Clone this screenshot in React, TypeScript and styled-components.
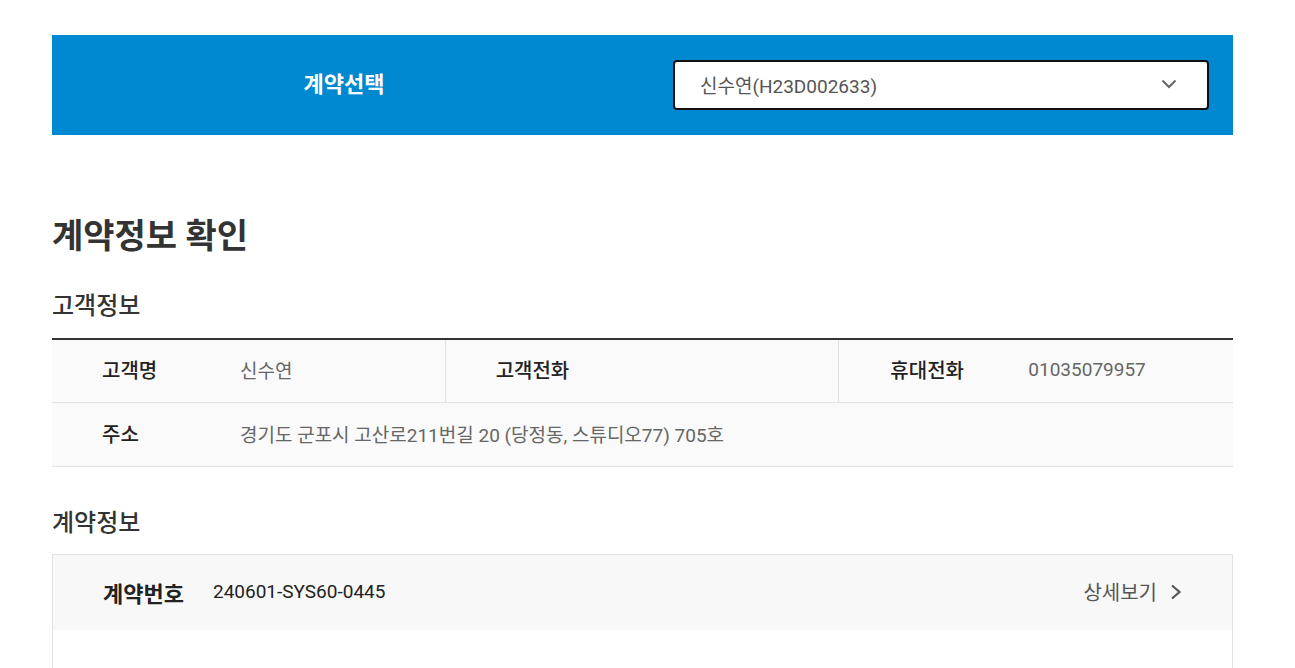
import React from "react";
import styled, { createGlobalStyle } from "styled-components";

const GlobalStyle = createGlobalStyle`
  html, body {
    margin: 0;
    padding: 0;
    background: #ffffff;
  }
  body {
    font-family: Roboto, "Noto Sans CJK KR", "Noto Sans", sans-serif;
    color: #222222;
  }
  * { box-sizing: border-box; }
`;

const Page = styled.div`
  width: 1181px;
  margin-left: 52px;
  padding-top: 35px;
  padding-bottom: 40px;
`;

const SelectBand = styled.section`
  display: flex;
  align-items: center;
  height: 100px;
  background: #0089d1;
`;

const BandLabel = styled.h2`
  flex: 0 0 584px;
  margin: 0;
  padding-bottom: 6px;
  text-align: center;
  color: #ffffff;
  font-size: 22px;
  font-weight: 700;
`;

const SelectBox = styled.div`
  display: flex;
  align-items: center;
  justify-content: space-between;
  width: 536px;
  height: 50px;
  margin-left: 37px;
  padding: 0 30px 2px 25px;
  background: #ffffff;
  border: 2px solid #111111;
  border-radius: 4px;
  font-size: 19px;
  color: #555555;
  cursor: pointer;
`;

const PageTitle = styled.h1`
  margin: 78px 0 0;
  font-size: 34px;
  line-height: 46px;
  font-weight: 700;
  color: #333333;
`;

const SectionTitle = styled.h3<{ $gap: number }>`
  margin: ${(p) => p.$gap}px 0 0;
  font-size: 24px;
  line-height: 32px;
  font-weight: 500;
  color: #333333;
`;

const InfoTable = styled.div`
  margin-top: 16px;
  border-top: 2px solid #333333;
  background: #fafafa;
`;

const InfoRow = styled.div`
  display: grid;
  grid-template-columns: 1fr 1fr 1fr;
  border-bottom: 1px solid #e2e2e2;
`;

const InfoCell = styled.div<{ $span?: number; $divider?: boolean }>`
  display: flex;
  align-items: center;
  height: ${(p) => (p.$span ? 63 : 62)}px;
  padding-left: ${(p) => (p.$divider === undefined && !p.$span ? 51 : 50)}px;
  padding-bottom: 3px;
  grid-column: span ${(p) => p.$span ?? 1};
  border-right: ${(p) => (p.$divider ? "1px solid #e2e2e2" : "none")};
`;

const CellLabel = styled.span`
  flex: 0 0 138px;
  font-size: 20px;
  font-weight: 500;
  color: #222222;
`;

const CellValue = styled.span`
  font-size: 19px;
  color: #666666;
`;

const ContractCard = styled.div`
  margin-top: 15px;
  border: 1px solid #e2e2e2;
  min-height: 160px;
`;

const CardHeader = styled.div`
  display: flex;
  align-items: center;
  height: 75px;
  padding: 0 50px 2px;
  background: #f8f8f8;
`;

const ContractLabel = styled.span`
  font-size: 22px;
  font-weight: 700;
  color: #222222;
  margin-right: 29px;
`;

const ContractNo = styled.span`
  font-size: 19px;
  color: #222222;
`;

const DetailLink = styled.a`
  display: flex;
  align-items: center;
  gap: 13px;
  margin-left: auto;
  font-size: 20px;
  color: #555555;
  text-decoration: none;
  cursor: pointer;
`;

const ChevronDown = () => (
  <svg width="16" height="10" viewBox="0 0 16 10" fill="none">
    <path d="M1.5 1.5 L8 8 L14.5 1.5" stroke="#666" strokeWidth="2" />
  </svg>
);

const ChevronRight = () => (
  <svg width="12" height="16" viewBox="0 0 12 16" fill="none">
    <path d="M2 1.5 L9.5 8 L2 14.5" stroke="#555" strokeWidth="2.2" />
  </svg>
);

export default function App() {
  return (
    <>
      <GlobalStyle />
      <Page>
        <SelectBand>
          <BandLabel>계약선택</BandLabel>
          <SelectBox>
            <span>신수연(H23D002633)</span>
            <ChevronDown />
          </SelectBox>
        </SelectBand>

        <PageTitle>계약정보 확인</PageTitle>

        <SectionTitle $gap={31}>고객정보</SectionTitle>
        <InfoTable>
          <InfoRow>
            <InfoCell $divider>
              <CellLabel>고객명</CellLabel>
              <CellValue>신수연</CellValue>
            </InfoCell>
            <InfoCell $divider>
              <CellLabel>고객전화</CellLabel>
              <CellValue></CellValue>
            </InfoCell>
            <InfoCell>
              <CellLabel>휴대전화</CellLabel>
              <CellValue>01035079957</CellValue>
            </InfoCell>
          </InfoRow>
          <InfoRow>
            <InfoCell $span={3}>
              <CellLabel>주소</CellLabel>
              <CellValue>경기도 군포시 고산로211번길 20 (당정동, 스튜디오77) 705호</CellValue>
            </InfoCell>
          </InfoRow>
        </InfoTable>

        <SectionTitle $gap={40}>계약정보</SectionTitle>
        <ContractCard>
          <CardHeader>
            <ContractLabel>계약번호</ContractLabel>
            <ContractNo>240601-SYS60-0445</ContractNo>
            <DetailLink>
              상세보기
              <ChevronRight />
            </DetailLink>
          </CardHeader>
        </ContractCard>
      </Page>
    </>
  );
}
